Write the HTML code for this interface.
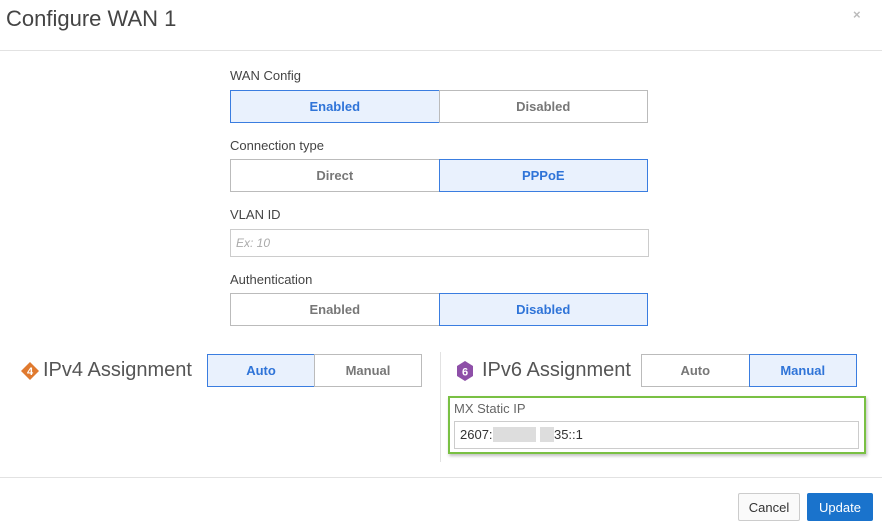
<!DOCTYPE html><html><head><style>
body{margin:0;width:882px;height:532px;background:#fff;font-family:"Liberation Sans",sans-serif;position:relative;overflow:hidden}
.a{position:absolute}
.lbl{font-size:13px;color:#444}
.grp{display:flex;height:33px}
.grp div{flex:1;border:1px solid #bbb;display:flex;align-items:center;justify-content:center;font-size:13px;font-weight:bold;color:#777;box-sizing:border-box}
.grp div.on{background:#e9f1fd;border-color:#3a7de0;color:#2f74d8}
.grp div+div{margin-left:-1px}
.h{font-size:20px;color:#555;font-weight:300}
</style></head><body>
<div class="a" style="left:6px;top:6px;font-size:22px;color:#444">Configure WAN 1</div>
<div class="a" style="left:853px;top:7px;font-size:13px;color:#bbb;font-weight:bold">×</div>
<div class="a" style="left:0;top:50px;width:882px;height:1px;background:#e2e2e2"></div>

<div class="a lbl" style="left:230px;top:68px">WAN Config</div>
<div class="a grp" style="left:230px;top:90px;width:418px"><div class="on">Enabled</div><div>Disabled</div></div>
<div class="a lbl" style="left:230px;top:138px">Connection type</div>
<div class="a grp" style="left:230px;top:159px;width:418px"><div>Direct</div><div class="on">PPPoE</div></div>
<div class="a lbl" style="left:230px;top:207px">VLAN ID</div>
<div class="a" style="left:230px;top:229px;height:26px;border:1px solid #ccc;font-size:12px;color:#aaa;font-style:italic;line-height:26px;padding-left:5px;width:412px">Ex: 10</div>
<div class="a lbl" style="left:230px;top:272px">Authentication</div>
<div class="a grp" style="left:230px;top:293px;width:418px"><div>Enabled</div><div class="on">Disabled</div></div>

<svg class="a" style="left:20px;top:361px" width="20" height="20" viewBox="0 0 20 20"><polygon points="10,1 19,10 10,19 1,10" fill="#e07a2f"/><text x="10" y="14" text-anchor="middle" font-size="11" font-weight="bold" fill="#fff" font-family="Liberation Sans">4</text></svg>
<div class="a h" style="left:43px;top:359px">IPv4 Assignment</div>
<div class="a grp" style="left:207px;top:354px;width:215px"><div class="on">Auto</div><div>Manual</div></div>
<div class="a" style="left:440px;top:352px;width:1px;height:110px;background:#e2e2e2"></div>

<svg class="a" style="left:456px;top:361px" width="18" height="20" viewBox="0 0 18 20"><polygon points="9,0 17,5 17,15 9,20 1,15 1,5" fill="#8e4fa8"/><text x="9" y="14.5" text-anchor="middle" font-size="11" font-weight="bold" fill="#fff" font-family="Liberation Sans">6</text></svg>
<div class="a h" style="left:482px;top:359px">IPv6 Assignment</div>
<div class="a grp" style="left:641px;top:354px;width:216px"><div>Auto</div><div class="on">Manual</div></div>

<div class="a" style="left:448px;top:396px;width:414px;height:54px;border:2px solid #79c043;box-shadow:1px 2px 3px rgba(0,0,0,.25)"></div>
<div class="a lbl" style="left:454px;top:401px;color:#666">MX Static IP</div>
<div class="a" style="left:454px;top:421px;width:398px;height:26px;border:1px solid #ccc;font-size:13px;color:#333;line-height:26px;padding-left:5px">2607:<span style="background:#ddd">&nbsp;&nbsp;&nbsp;&nbsp;&nbsp;&nbsp;&nbsp;&nbsp;&nbsp;&nbsp;&nbsp;&nbsp;</span>&nbsp;<span style="background:#ddd">&nbsp;&nbsp;&nbsp;&nbsp;</span>35::1</div>

<div class="a" style="left:0;top:477px;width:882px;height:1px;background:#e2e2e2"></div>
<div class="a" style="left:738px;top:493px;width:62px;height:28px;border:1px solid #ccc;border-radius:2px;font-size:13px;color:#333;display:flex;align-items:center;justify-content:center;box-sizing:border-box;background:#fafafa">Cancel</div>
<div class="a" style="left:807px;top:493px;width:66px;height:28px;background:#1a73cc;border-radius:2px;font-size:13px;color:#fff;display:flex;align-items:center;justify-content:center">Update</div>
</body></html>
